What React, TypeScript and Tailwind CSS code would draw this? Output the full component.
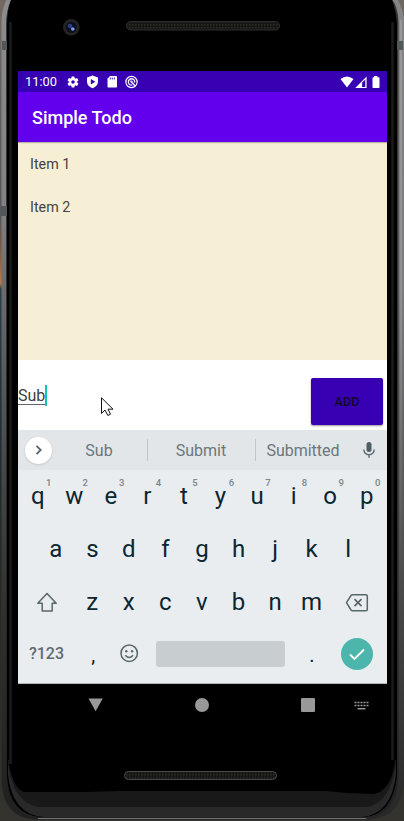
import type { ReactNode } from 'react';

const TOP_KEYS = ['q', 'w', 'e', 'r', 't', 'y', 'u', 'i', 'o', 'p'];
const HOME_KEYS = ['a', 's', 'd', 'f', 'g', 'h', 'j', 'k', 'l'];
const BOTTOM_KEYS = ['z', 'x', 'c', 'v', 'b', 'n', 'm'];

function Key({ children, hint }: { children: ReactNode; hint?: string }) {
  return (
    <div className="relative flex h-full w-[36.55px] shrink-0 items-center justify-center text-[24px] leading-none text-[#0b2630]">
      {children}
      {hint && (
        <span className="absolute left-[26.5px] top-[8px] text-[9.500px] font-medium leading-none text-[#7b868b]">{hint}</span>
      )}
    </div>
  );
}

/* Metal edges and bezel of the handset, drawn behind the display. */
function Handset() {
  return (
    <svg className="absolute inset-0" width="404" height="821" viewBox="0 0 404 821">
      <defs>
        <linearGradient id="edge" x1="0" y1="0" x2="0" y2="821" gradientUnits="userSpaceOnUse">
          <stop offset="0" stopColor="#8c8c8e" />
          <stop offset="0.25" stopColor="#828284" />
          <stop offset="0.38" stopColor="#666668" />
          <stop offset="0.55" stopColor="#4a4a4b" />
          <stop offset="0.75" stopColor="#303031" />
          <stop offset="1" stopColor="#202020" />
        </linearGradient>
        <linearGradient id="edgeRight" x1="0" y1="0" x2="0" y2="821" gradientUnits="userSpaceOnUse">
          <stop offset="0" stopColor="#858587" />
          <stop offset="0.35" stopColor="#7d7d7f" />
          <stop offset="0.55" stopColor="#606061" />
          <stop offset="0.8" stopColor="#3f3f40" />
          <stop offset="1" stopColor="#282828" />
        </linearGradient>
        <linearGradient id="outside" x1="0" y1="0" x2="0" y2="821" gradientUnits="userSpaceOnUse">
          <stop offset="0" stopColor="#716961" />
          <stop offset="0.26" stopColor="#54585c" />
          <stop offset="0.3" stopColor="#7a5840" />
          <stop offset="0.345" stopColor="#b97845" />
          <stop offset="0.352" stopColor="#2b414c" />
          <stop offset="0.5" stopColor="#1d3038" />
          <stop offset="0.7" stopColor="#242a22" />
          <stop offset="1" stopColor="#34332e" />
        </linearGradient>
        <linearGradient id="sheen" x1="0" y1="0" x2="0" y2="821" gradientUnits="userSpaceOnUse">
          <stop offset="0" stopColor="#b8b8b8" stopOpacity="0.4" />
          <stop offset="0.4" stopColor="#b8b8b8" stopOpacity="0.3" />
          <stop offset="0.7" stopColor="#b8b8b8" stopOpacity="0" />
        </linearGradient>
        <pattern id="mesh" width="3" height="3" patternUnits="userSpaceOnUse">
          <rect width="3" height="3" fill="#161614" />
          <rect width="1.5" height="1.5" fill="#2b2b27" />
        </pattern>
      </defs>
      <rect width="404" height="821" fill="url(#outside)" />
      <path d="M10 -6Q1.500 6 1.500 22V782Q3 818 36 819.500H368Q402 818 404 780V20Q402 4 393 -6Z" fill="url(#edge)" />
      <path d="M300 -6H393Q402 4 404 20V780Q402 818 368 819.500H300Z" fill="url(#edgeRight)" />
      <path d="M12 -2Q6 10 6 24V780Q8 817 38 818H366Q396 816 398.500 780V22Q398 6 391 -2Z" fill="#222" fillOpacity="0.8" />
      <path d="M12 -2Q7 8 7 26V776Q9 814 40 817H364Q393 815 397 776V24Q396 8 391 -2Z" fill="#000" />
      <path d="M8 765V774Q12 815 44 817H362Q392 814 396 774V765Z" fill="#292929" />
      <path d="M8 760V764Q13 802 38 807H366Q390 804 396 764V760Z" fill="#191919" />
      <path d="M9 750V764Q13 788 24 792H85L120 791H325Q350 794 374 794Q392 790 395 760V750Z" fill="#000" />
      <path d="M10.500 22V764M392.500 22V760" stroke="#1b1b1b" strokeWidth="2.500" />
      <path d="M401 20V560" stroke="url(#edgeRight)" strokeWidth="2" />
      <rect x="400" y="20" width="2" height="560" fill="url(#sheen)" />
      <path d="M2 41H7V50H2ZM1 206H7V216H1ZM397 41H403V50H397Z" fill="#525757" />
      <path d="M38 818.500H366" stroke="#717171" />
      <rect x="126.500" y="21.500" width="153" height="8.500" rx="4.250" fill="url(#mesh)" stroke="#2e2e2c" />
      <rect x="124.500" y="771.500" width="152" height="8" rx="4" fill="url(#mesh)" stroke="#4a4a47" />
      <circle cx="71.300" cy="27.300" r="8.300" fill="#242424" />
      <circle cx="71.300" cy="27.300" r="5.500" fill="#0b1021" />
      <circle cx="70" cy="26" r="2.300" fill="#263f87" />
      <circle cx="72.800" cy="29" r="1.800" fill="#8798e8" />
    </svg>
  );
}

function StatusBar() {
  return (
    <div className="flex h-[21px] shrink-0 items-center bg-[#3700b3] pl-[7px] pr-[6px] text-white">
      <span className="w-[41px] pt-px text-[12.800px] leading-none">11:00</span>
      <svg width="14" height="14" viewBox="0 0 24 24" fill="currentColor">
        <path d="M19.140 12.940c.04-.3.06-.61.06-.94s-.02-.64-.07-.94l2.030-1.580a.49.49 0 0 0 .12-.61l-1.920-3.320a.49.49 0 0 0-.59-.22l-2.390.96a7 7 0 0 0-1.620-.94l-.36-2.540a.48.48 0 0 0-.48-.41h-3.840a.47.47 0 0 0-.47.41l-.36 2.540a7.300 7.300 0 0 0-1.620.94l-2.390-.96a.48.48 0 0 0-.59.22L2.740 8.870a.47.47 0 0 0 .12.61l2.030 1.580a6 6 0 0 0 0 1.880l-2.030 1.580a.49.49 0 0 0-.12.61l1.920 3.320c.12.22.37.29.59.22l2.390-.96c.5.38 1.030.7 1.620.94l.36 2.540c.05.24.24.41.48.41h3.840c.24 0 .44-.17.47-.41l.36-2.540a7 7 0 0 0 1.620-.94l2.390.96c.22.08.47 0 .59-.22l1.920-3.320a.47.47 0 0 0-.12-.61zM12 15a3 3 0 1 1 0-6 3 3 0 0 1 0 6z" />
      </svg>
      <svg className="ml-[6px]" width="13" height="14" viewBox="0 0 13 14">
        <path d="M6.500.5 12 2.600V6.500Q12 11 6.500 13.300Q1 11 1 6.500V2.600Z" fill="#fff" />
        <path d="M4.800 4v5.400L9.300 6.700Z" fill="#3700b3" />
      </svg>
      <svg className="ml-[7px]" width="12" height="14" viewBox="0 0 12 14">
        <path d="M4 1H10.200Q11 1 11 1.800V11.700Q11 12.500 10.200 12.500H2.300Q1.500 12.500 1.500 11.700V3.700Z" fill="#fff" />
        <path d="M4.300 2.500V4.500M6.300 2.500V4.500M8.300 2.500V4.500" stroke="#3700b3" strokeWidth="0.9" />
      </svg>
      <svg className="ml-[7px]" width="13" height="14" viewBox="0 0 13 14" fill="none" stroke="#fff">
        <circle cx="6.500" cy="7" r="5.600" strokeWidth="1.200" />
        <path d="M7.200 10.100A3.200 3.200 0 1 1 9.700 7.500M5.600 6.300 10 10.800" strokeWidth="1.300" />
        <path d="M5 6.300A1.800 1.800 0 0 1 8 7.400" strokeWidth="0.7" />
      </svg>
      <svg className="ml-auto" width="41" height="14" viewBox="0 0 41 14">
        <path d="M.5 4Q7-1 13.500 4L7 12.500Z" fill="#fff" />
        <path d="M15.200 13 26.600 1.500V13ZM21.200 8.400V12H25.300V4.400Z" fill="#fff" fillRule="evenodd" />
        <path d="M21.500 7.500V12" stroke="#fff" strokeWidth="1.200" />
        <path d="M34.200 1H37.400V2.200H38.700Q39.500 2.200 39.500 3V12.200Q39.500 13 38.700 13H33.300Q32.500 13 32.500 12.200V3Q32.500 2.200 33.300 2.200H34.200Z" fill="#fff" />
      </svg>
    </div>
  );
}

function Suggestions() {
  return (
    <div className="flex h-10 shrink-0 items-center bg-[#e2e6e9] text-[16px] leading-none text-[#6a777d]">
      <div className="ml-[7px] flex size-[27px] items-center justify-center rounded-full bg-white shadow-sm">
        <svg width="8" height="12" viewBox="0 0 8 12" fill="none" stroke="#59646a" strokeWidth="1.800">
          <path d="M1.500 1.800 5.700 6 1.500 10.200" />
        </svg>
      </div>
      <div className="w-[95px] pr-px pt-[2px] text-center">Sub</div>
      <div className="h-[22px] w-px bg-[#bfc5c8]" />
      <div className="w-[107px] pr-px pt-[2px] text-center">Submit</div>
      <div className="h-[22px] w-px bg-[#bfc5c8]" />
      <div className="w-[94px] pt-[2px] text-center">Submitted</div>
      <svg className="ml-[12px]" width="14" height="18" viewBox="0 0 14 18">
        <rect x="4.500" y="1" width="5" height="10" rx="2.500" fill="#4f5d64" />
        <path d="M1.800 8.500A5.200 5.200 0 0 0 12.200 8.500M7 13.500V16.800" fill="none" stroke="#5c686e" strokeWidth="1.400" />
      </svg>
    </div>
  );
}

function Keyboard() {
  return (
    <div className="flex h-[214px] shrink-0 flex-col border-b border-[#b3b7ba] bg-[#e9edf0]">
      <div className="flex h-[52.5px] pl-[1.5px]">
        {TOP_KEYS.map((k, i) => (
          <Key key={k} hint={String((i + 1) % 10)}>{k}</Key>
        ))}
      </div>
      <div className="flex h-[52.5px] pl-[19.5px]">
        {HOME_KEYS.map((k) => (
          <Key key={k}>{k}</Key>
        ))}
      </div>
      <div className="flex h-[52.5px] items-center pt-px">
        <div className="flex w-[56px] justify-center pl-[2px] pt-[2px]">
          <svg width="22" height="21" viewBox="0 0 22 21" fill="none" stroke="#59666c" strokeWidth="1.500" strokeLinejoin="round">
            <path d="M11 1.500 20.200 11.200H16.200V19H6.200V11.200H1.800Z" />
          </svg>
        </div>
        {BOTTOM_KEYS.map((k) => (
          <Key key={k}>{k}</Key>
        ))}
        <svg className="ml-[15px] mt-[3px]" width="24" height="20" viewBox="0 0 24 20" fill="none" stroke="#59666c" strokeWidth="1.500" strokeLinejoin="round">
          <path d="M7.500 1.800H20.800Q22.300 1.800 22.300 3.300V16.200Q22.300 17.700 20.800 17.700H7.500Q6.500 17.700 6 17L1.500 9.700 6 2.500Q6.500 1.800 7.500 1.800Z" />
          <path d="M9.500 6.200 16.500 13.200M16.500 6.200 9.500 13.200" strokeWidth="1.700" />
        </svg>
      </div>
      <div className="flex h-[52.5px] items-center">
        <div className="w-[57px] text-center text-[16px] font-medium leading-none text-[#5e6a70]">?123</div>
        <Key><span className="pt-[2px] text-[20px] leading-none">,</span></Key>
        <svg className="ml-[8px]" width="19" height="19" viewBox="0 0 19 19" fill="none" stroke="#59666c">
          <circle cx="9.200" cy="9.200" r="8.200" strokeWidth="1.500" />
          <circle cx="6.300" cy="7.200" r="1.200" fill="#59666c" stroke="none" />
          <circle cx="12.100" cy="7.200" r="1.200" fill="#59666c" stroke="none" />
          <path d="M5.300 11.200Q9.200 15.800 13.100 11.200" strokeWidth="1.400" />
        </svg>
        <div className="ml-[17px] h-[26px] w-[129px] rounded-[3px] bg-[#c8cdd0]" />
        <div className="ml-[9px]"><Key><span className="pt-[2px] text-[20px] leading-none">.</span></Key></div>
        <div className="ml-[11px] mt-px flex size-8 items-center justify-center rounded-full bg-[#4db6ac]">
          <svg width="16" height="13" viewBox="0 0 16 13" fill="none" stroke="#fff" strokeWidth="1.900">
            <path d="M1 6.500 5.500 11 15 1.500" />
          </svg>
        </div>
      </div>
    </div>
  );
}

function NavBar() {
  return (
    <div className="flex h-[42px] shrink-0 items-center pl-[70px]">
      <svg width="15" height="14" viewBox="0 0 15 14"><path d="M.5 .5H14.800L7.600 13.300Z" fill="#989898" /></svg>
      <div className="ml-[92px] size-[14px] rounded-full bg-[#989898]" />
      <div className="ml-[92px] size-[14px] rounded-[1px] bg-[#989898]" />
      <svg className="ml-[39px]" width="15" height="9" viewBox="0 0 15 9">
        <path d="M.5 1.500H14.500M.5 4.500H14.500" stroke="#989898" strokeWidth="1.700" strokeDasharray="2 1" />
        <path d="M3.500 7.700H11.500" stroke="#989898" strokeWidth="1.500" />
      </svg>
    </div>
  );
}

export default function App() {
  return (
    <div className="relative h-[821px] w-[404px] overflow-hidden bg-black font-['Roboto',sans-serif]">
      <Handset />
      <div className="relative pl-[18px] pt-[71px]">
        <main className="flex w-[369px] flex-col">
          <StatusBar />
          <header className="relative flex h-[50px] shrink-0 items-center bg-[#6200ee] pl-[14px] pt-[2px] shadow-[0_1px_1px_rgba(0,0,0,0.25)]">
            <h1 className="text-[18px] font-medium leading-none text-white">Simple Todo</h1>
          </header>
          <ul className="h-[218px] shrink-0 bg-[#f7efd5] pl-[12px] pt-px text-[14.300px] text-[#45423e]">
            <li className="flex h-[43.5px] items-center">Item 1</li>
            <li className="flex h-[43px] items-center">Item 2</li>
          </ul>
          <div className="flex h-[70px] shrink-0 items-start justify-between bg-white pr-[4px]">
            <div className="mt-[24px] flex h-[22px] items-center">
              <span className="mt-[2px] border-b border-[#666] text-[16px] leading-[17px] text-[#404040]">Sub</span>
              <span className="h-[21px] w-[1.5px] bg-[#12c5b2]" />
            </div>
            <button className="mt-[18px] flex h-[47px] w-[72px] items-center justify-center rounded-[2px] bg-[#3700b3] pt-[2px] text-[12.500px] font-medium tracking-[0.1px] text-[#120824] shadow-[0_1px_2px_rgba(0,0,0,0.4)]">
              ADD
            </button>
          </div>
          <Suggestions />
          <Keyboard />
          <NavBar />
        </main>
      </div>
      <svg className="absolute left-[101px] top-[397px]" width="13" height="20" viewBox="0 0 13 20">
        <path d="M.5.8V16.500L4 13 6.800 18.500 9.500 17.200 7 12.200H12Z" fill="#fff" stroke="#111" strokeWidth="1" />
      </svg>
    </div>
  );
}
